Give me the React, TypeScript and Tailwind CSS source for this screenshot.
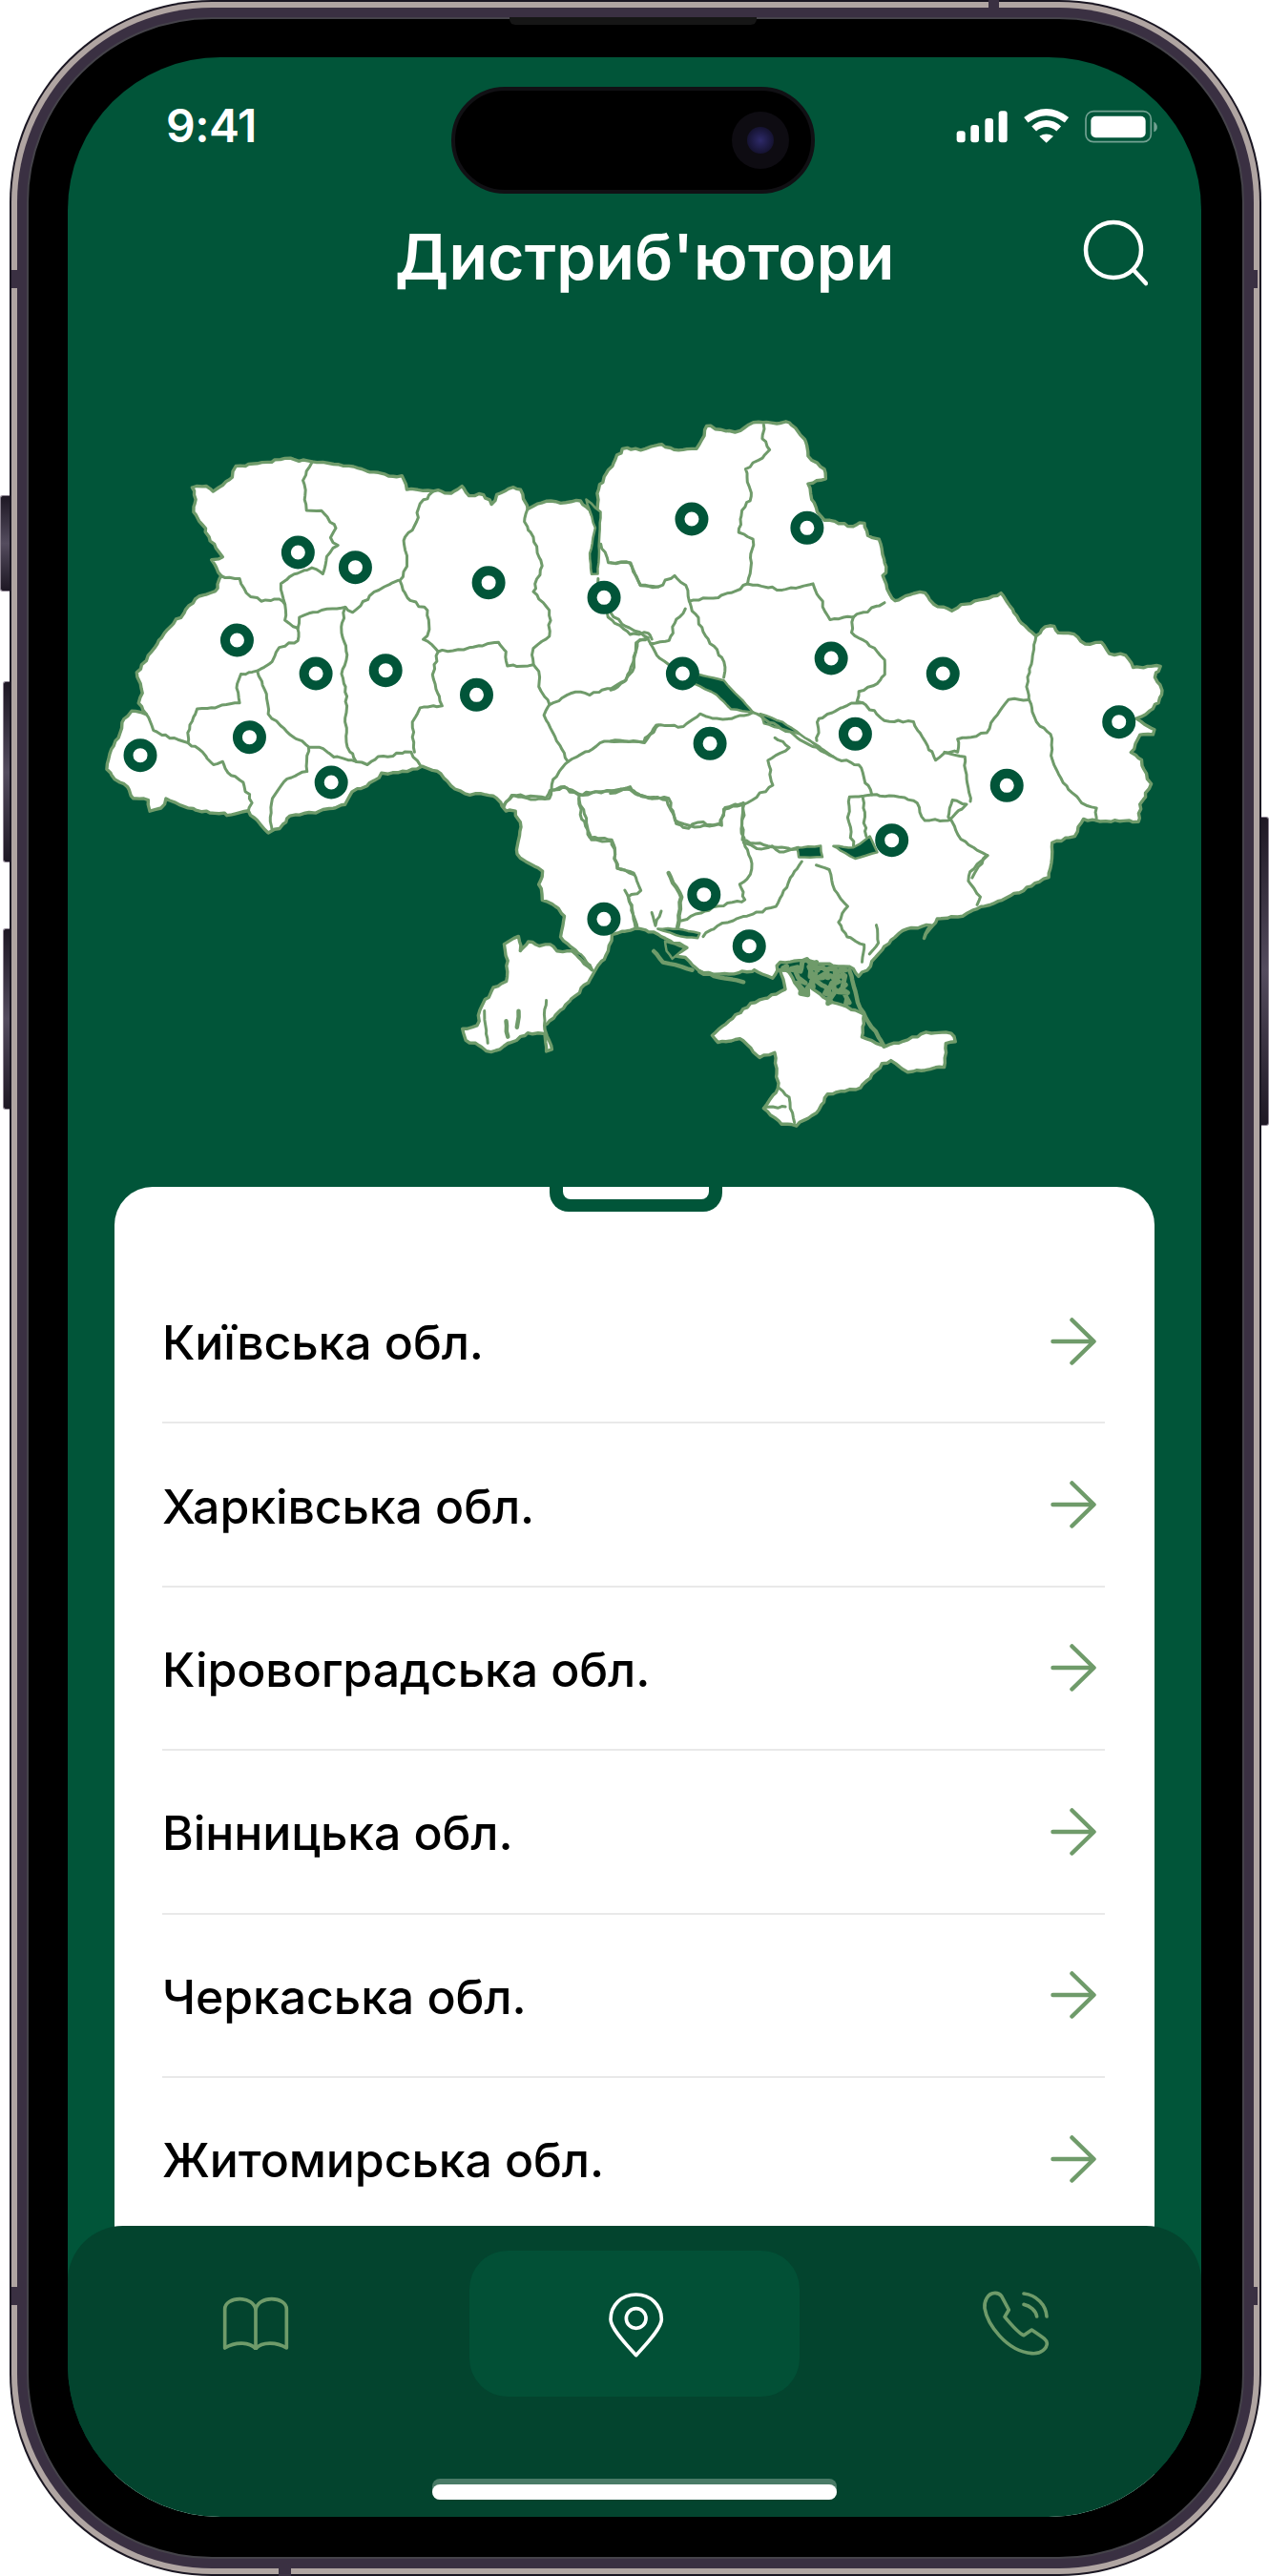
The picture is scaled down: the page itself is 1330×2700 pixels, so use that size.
import React from "react";

type P = [number, number];
const GREEN = "#6f9b6a";
const BG = "#015539";

const parse = (s: string, ox: number, oy: number, kx: number): P[] =>
  s.trim().split(/\s+/).map((t) => {
    const [a, b] = t.split(",").map(Number);
    return [ox + a / kx, oy + b / 3] as P;
  });
const k = 2.613;
const z2 = (s: string) => parse(s, 90, 420, k);
const z3 = (s: string) => parse(s, 640, 420, k);
const z4 = (s: string) => parse(s, 450, 800, k);

// small deterministic wobble, so traced borders look like a real map's
let seed = 7;
const rnd = () => {
  seed = (seed * 16807) % 2147483647;
  return seed / 2147483647 - 0.5;
};
const rough = (pts: P[], amp = 2.2, step = 7, closed = false): string => {
  const out: P[] = [];
  const list = closed ? [...pts, pts[0]] : pts;
  for (let i = 0; i < list.length - 1; i++) {
    const [x0, y0] = list[i];
    const [x1, y1] = list[i + 1];
    const n = Math.max(1, Math.round(Math.hypot(x1 - x0, y1 - y0) / step));
    for (let j = 0; j < n; j++) {
      const t = j / n;
      const a = j === 0 ? 0.3 : 1;
      out.push([x0 + (x1 - x0) * t + rnd() * amp * a, y0 + (y1 - y0) * t + rnd() * amp * a]);
    }
  }
  if (!closed) out.push(list[list.length - 1]);
  return "M" + out.map((p) => `${p[0].toFixed(1)} ${p[1].toFixed(1)}`).join("L") + (closed ? "Z" : "");
};

const mainland: P[] = [
  ...z2("292,272 330,268 348,285 375,265 400,240 410,205 470,198 545,182 620,192 690,200 745,212 790,225 830,238 865,235 880,280 950,285 965,280 975,285 1000,290 1030,268 1050,298 1090,295 1110,325 1125,295 1170,272 1190,280 1210,340 1260,315 1300,322 1355,315 1395,365 1405,280 1420,240 1445,195 1470,150 1520,155 1568,140"),
  ...z3("140,138 185,155 235,150 250,120 262,78 300,90 340,100 390,68 440,70 490,68 515,100 535,130 540,175 585,215 590,245 540,262 550,310 565,350 585,375 625,385 650,395 695,385 705,425 735,435 750,510 755,540 745,550 765,610 780,630 830,605 860,605 885,640 935,660 960,640 1020,625 1070,605 1100,655 1125,700 1165,740 1190,710 1215,710 1225,730 1270,735 1300,765 1345,760 1365,795 1410,800 1430,840 1470,835 1505,835 1490,870 1510,910 1500,950 1465,985 1440,1000 1490,1035 1485,1050 1450,1050 1425,1105 1455,1130 1470,1190 1480,1205 1450,1270 1445,1325 1380,1320 1330,1320 1295,1315 1270,1370 1210,1390 1200,1500"),
  ...z4("1568,430 1510,450 1460,480 1390,490 1370,520 1355,550 1375,510 1310,520 1265,555 1230,600 1200,650 1175,670 1150,640 1120,640 1040,620 960,625 940,675 890,650 885,655 780,665 740,655 700,610 670,605 705,580 660,560 615,530 565,520 500,540 490,590 450,660 435,690 400,730 330,810 315,825 335,900 320,905 315,850 270,848 205,890 170,908 100,870 90,835 130,825 145,760 175,705 210,685 215,620 205,570 245,545 250,590 270,560 300,575 330,570 350,590 390,590 445,650 410,600 360,545 370,480 345,450 310,430 300,380 310,340 275,315 240,285 240,260 250,200 235,150 210,150 185,110 140,95 110,100 60,70 20,25"),
  ...z2("920,1150 880,1165 840,1170 810,1170 790,1195 770,1210 730,1230 710,1270 640,1290 560,1305 530,1345 500,1358 470,1320 445,1290 400,1302 340,1295 280,1280 220,1252 205,1280 175,1290 170,1255 130,1250 115,1215 80,1190 58,1160 65,1110 90,1060 105,1000 125,975 165,985 145,950 155,920 140,855 170,800 240,700 310,615 355,600 370,550 345,500 375,490 340,440 320,390 295,350 300,310"),
];

const crimea = z4("960,650 975,710 950,725 880,755 820,810 775,855 790,878 850,865 880,895 905,925 945,910 955,1020 915,1085 965,1135 1005,1140 1060,1100 1090,1040 1180,1020 1240,945 1265,935 1310,972 1410,955 1415,880 1440,875 1430,850 1360,845 1310,870 1250,890 1185,860 1190,790 1130,760 1100,750 1040,700 1020,725 980,650");

const borders: P[][] = [
  z2("620,192 595,250 605,345 645,345 685,400 670,430 690,455 660,490 650,545 620,525 570,545 535,575 545,640"),
  z2("370,550 420,560 440,605 480,630 530,625 545,640 545,690 580,715"),
  z2("950,285 915,325 905,380 870,440 880,520 860,565"),
  z2("580,715 585,680 660,655 710,650 730,665 790,600 855,565"),
  z2("580,715 580,755 530,775 510,820 470,850 425,860 415,890 420,950 345,965 305,970 285,1020 280,1075"),
  z2("165,985 185,1035 230,1060 280,1075 320,1105 350,1145 375,1135 390,1170 430,1200 455,1265 445,1290"),
  z2("710,650 700,730 715,800 700,860 715,930 710,1010 715,1090 740,1135"),
  z2("470,850 490,910 500,985 550,1040 610,1090 640,1090 680,1120 740,1135 770,1145 800,1120 890,1105 915,1145"),
  z2("610,1090 605,1165 550,1190 510,1250 505,1310 510,1350"),
  z2("860,565 880,620 935,660 940,720 925,750 965,790 950,860 975,960 915,965 895,1010 900,1105"),
  z2("965,790 1060,775 1130,760 1150,790 1155,835 1225,830"),
  z2("1210,340 1200,380 1225,430 1250,520 1225,600 1270,660 1270,740 1225,780 1225,830 1240,850 1240,900 1270,955 1255,990 1290,1070 1320,1135 1280,1190 1275,1225"),
  z2("1270,955 1340,915 1380,925 1440,905 1480,880 1500,820 1510,760 1540,745"),
  z2("1402,560 1430,680 1490,735 1540,730 1550,750"),
  z2("1410,450 1430,510 1490,510 1520,580 1568,585"),
  z2("1145,1275 1170,1240 1220,1255 1270,1250 1275,1225"),
  z2("1350,1250 1355,1300 1385,1380 1440,1385 1455,1470 1500,1490"),
  z2("1275,1225 1310,1215 1360,1240 1440,1225 1490,1215 1520,1245 1568,1250"),
  z2("1320,1135 1420,1070 1530,1075 1568,1020"),
  z3("0,510 55,510 80,580 130,585 175,550 205,580 215,630"),
  z3("420,75 415,120 435,155 415,180 370,215 385,300 360,345 350,415 390,435 385,510 375,575"),
  z3("215,630 280,620 340,600 375,575 470,595 555,575 600,690 665,680 750,635"),
  z3("665,680 660,730 710,770 750,815 750,860 730,890 680,915 675,945 690,950 750,1005 830,1010 860,1070 890,1130 915,1105 950,1105 950,1065 1030,1045 1050,1000 1090,940 1145,940 1140,900 1165,740"),
  z3("215,630 260,740 310,820 310,870"),
  z3("205,655 175,700 160,755 110,765 135,810 160,830"),
  z3("0,665 40,710 100,745 110,765"),
  z3("100,745 70,760 60,850 20,900 0,910"),
  z3("0,1070 90,1075 125,1020 200,1025 245,985 270,995 330,1000 390,980"),
  z3("565,1070 570,1000 660,950 690,950"),
  z3("390,980 500,1050 610,1120 680,1145 715,1240 790,1245 840,1265 860,1320 925,1320 975,1270 935,1255 925,1310 960,1380 1030,1430 990,1500"),
  z3("450,1060 490,1090 430,1130 445,1210 365,1270 360,1380 430,1400 510,1410"),
  z3("0,1235 40,1220 90,1245 160,1250 175,1320 230,1340 300,1330 310,1285 365,1270"),
  z3("715,1240 655,1245 650,1310 665,1400"),
  z3("690,1250 700,1370"),
  z3("915,1105 970,1120 975,1190 985,1260"),
  z3("1145,940 1165,1010 1205,1050 1210,1130 1240,1200 1290,1265 1330,1280 1330,1320"),
  z4("205,130 225,100 320,110 330,85 365,75 410,100 430,90 550,80 570,100 650,115 675,190 710,205 735,185 800,195 810,140 860,125"),
  z4("410,100 440,235 500,240 515,330 560,345 580,400 545,420 570,520"),
  z4("860,125 855,220 880,300 880,350 850,380 865,430 790,450 730,475 690,495"),
  z4("860,250 910,270 940,260 960,280 1010,265"),
  z4("1060,320 1095,335 1110,400 1145,450 1120,500 1145,545 1190,570 1185,625"),
  z4("1020,310 1000,340 970,400 950,450 870,480 790,510 750,545"),
  z4("535,400 550,440 565,520"),
  z4("610,470 620,510 635,465"),
  z4("1530,290 1480,340 1475,370 1510,420 1500,445"),
  z4("1225,510 1230,565 1205,600"),
  z4("150,780 160,880"),
  z4("320,745 315,820"),
  z4("955,1020 985,1050 1000,1130"),
  z4("915,1085 975,1080"),
];

const thick: P[][] = [
  z4("655,345 690,420 680,515"),
  z4("615,590 640,625 720,650"),
  z4("740,655 780,670 860,688"),
  z4("1150,650 1180,770 1245,890"),
  z4("210,810 215,860"),
  z4("245,780 240,830"),
];

const speckle: P[][] = [
  z4("975,640 1020,640 1040,625 1060,650 1075,640 1110,650 1140,650"),
  z4("1000,650 1020,690 1020,725 1045,690 1060,680 1075,700 1085,725 1110,700 1100,750"),
  z4("1040,640 1050,680 1090,670 1115,690 1130,670 1135,720 1140,760"),
];

const water: P[][] = [
  z2("1370,310 1410,350 1402,545 1385,545 1380,480 1395,400"),
  z3("240,860 310,880 390,980 330,970 290,925 230,890"),
  z3("410,985 470,1010 610,1120 520,1050 420,1015"),
  z3("510,1405 575,1400 580,1435 515,1435"),
  z3("610,1400 665,1405 710,1370 730,1420 670,1440 630,1415"),
  z4("625,520 680,520 740,535 735,550 690,545"),
  z4("645,560 700,580 665,615 650,590"),
  z4("390,590 440,640 415,600"),
];

const markers: P[] = [
  ...z2("581,477 738,524 1103,572 1419,619 414,753 630,858 821,848 1070,925 448,1058 149,1115 672,1200"),
  ...z3("222,372 538,400 604,810 197,858 910,858 1392,1010 670,1048 272,1078 1085,1210 770,1382"),
  ...z4("478,490 752,413 876,575"),
];

const UkraineMap = () => (
  <svg width="1188" height="780" viewBox="71 430 1188 780" className="block">
    <g fill="#fff" stroke={GREEN} strokeWidth="3.4" strokeLinejoin="round">
      <path d={rough(mainland, 2.6, 5, true)} />
      <path d={rough(crimea, 2.2, 5, true)} />
    </g>
    <g fill={BG} stroke={GREEN} strokeWidth="2.5" strokeLinejoin="round">
      {water.map((w, i) => (
        <path key={i} d={rough(w, 1, 6, true)} />
      ))}
    </g>
    <g fill="none" stroke={GREEN} strokeWidth="3" strokeLinejoin="round" strokeLinecap="round">
      {borders.map((b, i) => (
        <path key={i} d={rough(b, 2.6, 5)} />
      ))}
    </g>
    <g fill="none" stroke={GREEN} strokeWidth="4.5" strokeLinejoin="round" strokeLinecap="round">
      {thick.map((b, i) => (
        <path key={i} d={rough(b, 2, 6)} />
      ))}
    </g>
    <g fill="none" stroke={GREEN} strokeWidth="5" strokeLinejoin="round" strokeLinecap="round">
      {speckle.map((b, i) => (
        <path key={i} d={rough(b, 11, 3)} />
      ))}
    </g>
    <g fill="#fff" stroke={BG} strokeWidth="10">
      {markers.map(([x, y], i) => (
        <circle key={i} cx={x} cy={y} r="12.5" />
      ))}
    </g>
  </svg>
);

const StatusIcons = () => (
  <svg width="230" height="55" viewBox="0 0 690 165" className="block">
    <g fill="#fff">
      <rect x="38" y="97" width="27" height="36" rx="9" />
      <rect x="82" y="78" width="26" height="55" rx="9" />
      <rect x="127" y="57" width="26" height="76" rx="9" />
      <rect x="170" y="34" width="27" height="99" rx="9" />
      <path d="M298 113 Q320 100 342 113 L320 134 Z" />
      <rect x="460" y="50" width="172" height="68" rx="15" />
    </g>
    <g fill="none" stroke="#fff" strokeWidth="21">
      <path d="M256 62 C298 30 342 30 384 62" />
      <path d="M281 90 C305 68 335 68 359 90" />
    </g>
    <rect x="444" y="35" width="205" height="96" rx="24" fill="none" stroke="#fff" strokeOpacity="0.45" strokeWidth="5" />
    <path d="M658 68 C670 72 674 94 658 100 Z" fill="#fff" fillOpacity="0.45" />
  </svg>
);

const Arrow = () => (
  <svg width="48" height="50" viewBox="0 0 48 50" fill="none" stroke={GREEN} strokeWidth="4.5" strokeLinecap="round" strokeLinejoin="round" className="block">
    <path d="M2.5 25 H45 M22.5 2.5 L45.5 25 L22.5 47.5" />
  </svg>
);

const rows = ["Київська обл.", "Харківська обл.", "Кіровоградська обл.", "Вінницька обл.", "Черкаська обл.", "Житомирська обл."];

const SideBtn = ({ cls }: { cls: string }) => (
  <div className={`absolute w-[12px] rounded-l-[3px] border border-r-0 border-[#8b8290] bg-linear-to-b from-[#1e1824] via-[#544c5e] to-[#1e1824] ${cls}`} />
);

export default function App() {
  return (
    <div className="relative w-[1330px] h-[2700px] bg-white overflow-hidden" style={{ fontFamily: "Inter, 'Noto Sans', sans-serif" }}>
      <SideBtn cls="left-0 top-[519px] h-[101px]" />
      <SideBtn cls="left-[3px] w-[9px] top-[714px] h-[190px]" />
      <SideBtn cls="left-[3px] w-[9px] top-[973px] h-[190px]" />
      <div className="absolute right-0 top-[856px] h-[324px] w-[10px] rounded-r-[3px] border border-l-0 border-[#8b8290] bg-linear-to-b from-[#1e1824] via-[#544c5e] to-[#1e1824]" />

      {/* phone shell */}
      <div className="relative ml-[10px] w-[1312px] h-[2700px] rounded-[212px] bg-[#1a1622] p-[2px]">
        <div className="h-full rounded-[210px] bg-[#b0a5a2] p-[6px]">
          <div className="h-full rounded-[204px] bg-[#3a3042] p-[10px]">
            <div className="h-full rounded-[194px] bg-black border-2 border-[#45434a] pt-[40px] pl-[41px] pr-[43px] pb-[36px]">
              {/* screen */}
              <div className="relative h-[2578px] rounded-[160px] overflow-hidden flex flex-col bg-[#015539]">
                {/* status bar */}
                <div className="flex items-start justify-between h-[130px] pt-[45px] pl-[103px] pr-[39px]">
                  <span className="mt-[3px] text-[48px] leading-[48px] font-semibold text-white tracking-[-0.5px]">9:41</span>
                  <StatusIcons />
                </div>
                {/* header */}
                <div className="flex items-center h-[150px] pl-[343px] pr-[56px]">
                  <h1 className="mt-[8px] text-[66px] leading-[80px] font-semibold text-white tracking-[0.2px] whitespace-nowrap">Дистриб'ютори</h1>
                  <svg width="68" height="72" viewBox="0 0 68 72" fill="none" stroke="#fff" strokeWidth="4.5" strokeLinecap="round" className="ml-auto block">
                    <circle cx="32" cy="33" r="29" />
                    <path d="M53 54 L66 68" />
                  </svg>
                </div>
                {/* map */}
                <div className="mt-[90px]">
                  <UkraineMap />
                </div>
                {/* list card */}
                <div className="relative mt-[34px] mx-[49px] flex-1 overflow-hidden rounded-t-[40px] bg-white pl-[50px] pr-[52px] pt-[77px]">
                  <div className="absolute left-[456px] top-0 w-[181px] h-[26px] rounded-b-[20px] bg-[#015539] flex justify-center">
                    <div className="w-[153px] h-[13px] rounded-b-[8px] bg-white" />
                  </div>
                  {rows.map((r, i) => (
                    <div key={r} className="flex items-center justify-between h-[171.4px] border-b-2 border-[#e9e9e9] pr-[9px]">
                      <span className="mt-[3px] text-[50px] leading-[60px] font-medium text-black tracking-[-0.1px]">{r}</span>
                      <Arrow />
                    </div>
                  ))}
                </div>
                {/* bottom nav */}
                <div className="absolute inset-x-0 bottom-0 h-[305px] rounded-t-[58px] bg-[#03442e] flex flex-col px-[24px] pt-[26px]">
                  <div className="flex gap-[51px]">
                    <div className="w-[346px] h-[153px] flex items-center justify-center">
                      <svg width="70" height="56" viewBox="0 0 210 168" fill="none" stroke={GREEN} strokeWidth="11" strokeLinejoin="round" strokeLinecap="round" className="block mt-[-1px]">
                        <path d="M8 162 V40 C8 20 30 8 55 8 C80 8 100 20 105 40 C110 20 130 8 155 8 C180 8 202 20 202 40 V162 C170 142 125 142 105 164 C85 142 40 142 8 162 Z" />
                        <path d="M105 40 V164" />
                      </svg>
                    </div>
                    <div className="w-[346px] h-[153px] rounded-[40px] bg-[#025036] flex items-center justify-center">
                      <svg width="80" height="80" viewBox="0 0 240 240" fill="none" stroke="#fff" strokeWidth="11" strokeLinejoin="round" className="block">
                        <path d="M125 218 C100 190 45 135 45 105 C45 60 80 27 125 27 C170 27 205 60 205 105 C205 135 150 190 125 218 Z" />
                        <circle cx="125" cy="102" r="31" />
                      </svg>
                    </div>
                    <div className="w-[346px] h-[153px] flex items-center justify-center">
                      <svg width="100" height="80" viewBox="0 0 300 240" fill="none" stroke={GREEN} strokeWidth="11" strokeLinecap="round" strokeLinejoin="round" className="block ml-[12px]">
                        <path d="M75 22 C50 22 40 50 42 70 C50 120 110 205 190 212 C220 215 238 195 238 180 C238 170 230 165 190 138 L165 155 C150 150 120 115 105 97 L118 75 L95 32 C90 25 85 22 75 22 Z" />
                        <path d="M165 24 C205 28 235 60 237 96" />
                        <path d="M165 58 C185 62 203 78 206 96" />
                      </svg>
                    </div>
                  </div>
                  <div className="self-center mt-[86px] w-[424px] h-[22px] rounded-[8px] bg-[#4a7b67] flex items-end">
                    <div className="w-full h-[16px] rounded-[8px] bg-white" />
                  </div>
                </div>
              </div>
            </div>
          </div>
        </div>
      </div>

      {/* overlays on the shell */}
      <div className="absolute left-[534px] top-[18px] w-[259px] h-[8px] rounded-b-[6px] bg-[#161616]" />
      <div className="absolute left-[473px] top-[91px] w-[381px] h-[112px] rounded-[56px] bg-black border-[4px] border-[#111014] flex items-center justify-end pr-[23px]">
        <div className="w-[60px] h-[60px] rounded-full bg-[#0e0c12] flex items-center justify-center">
          <div className="w-[28px] h-[28px] rounded-full bg-radial from-[#2e2a6a] to-[#0c0a1c]" />
        </div>
      </div>
      <div className="absolute left-[1036px] top-0 w-[11px] h-[18px] bg-[#3a3042]" />
      <div className="absolute left-[292px] top-[2688px] w-[13px] h-[12px] bg-[#3a3042]" />
      <div className="absolute left-[12px] top-[283px] w-[7px] h-[19px] bg-[#3a3042]" />
      <div className="absolute left-[12px] top-[2397px] w-[7px] h-[19px] bg-[#3a3042]" />
      <div className="absolute left-[1311px] top-[283px] w-[7px] h-[19px] bg-[#3a3042]" />
      <div className="absolute left-[1311px] top-[2397px] w-[7px] h-[19px] bg-[#3a3042]" />
    </div>
  );
}
